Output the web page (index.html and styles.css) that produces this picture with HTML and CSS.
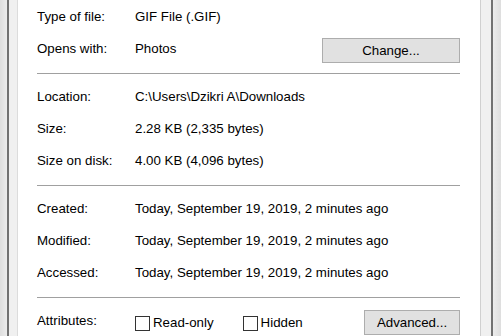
FILE: index.html
```html
<!DOCTYPE html>
<html lang="en">
<head>
    <meta charset="UTF-8">
    <meta name="viewport" content="width=device-width, initial-scale=1.0">
    <title>File Properties</title>
    <link rel="stylesheet" href="styles.css">
</head>
<body>
    <div class="dialog">
        <div class="edge edge-left"></div>
        <div class="gutter gutter-left"></div>

        <div class="page">
            <div class="row">
                <span class="label">Type of file:</span>
                <span class="value">GIF File (.GIF)</span>
            </div>
            <div class="row">
                <span class="label">Opens with:</span>
                <span class="value">Photos</span>
                <button class="btn btn-change">Change...</button>
            </div>

            <hr class="sep">

            <div class="row">
                <span class="label">Location:</span>
                <span class="value">C:\Users\Dzikri A\Downloads</span>
            </div>
            <div class="row">
                <span class="label">Size:</span>
                <span class="value">2.28 KB (2,335 bytes)</span>
            </div>
            <div class="row">
                <span class="label">Size on disk:</span>
                <span class="value">4.00 KB (4,096 bytes)</span>
            </div>

            <hr class="sep">

            <div class="row">
                <span class="label">Created:</span>
                <span class="value">Today, September 19, 2019, 2 minutes ago</span>
            </div>
            <div class="row">
                <span class="label">Modified:</span>
                <span class="value">Today, September 19, 2019, 2 minutes ago</span>
            </div>
            <div class="row">
                <span class="label">Accessed:</span>
                <span class="value">Today, September 19, 2019, 2 minutes ago</span>
            </div>

            <hr class="sep">

            <div class="row">
                <span class="label">Attributes:</span>
                <div class="attrs">
                    <label class="check"><input type="checkbox"> Read-only</label>
                    <label class="check"><input type="checkbox"> Hidden</label>
                </div>
                <button class="btn btn-advanced">Advanced...</button>
            </div>
        </div>

        <div class="gutter gutter-right"></div>
        <div class="edge edge-right"></div>
    </div>
</body>
</html>
```

FILE: styles.css
```css
* {
    margin: 0;
    padding: 0;
    box-sizing: border-box;
    font-family: 'Liberation Sans', Arial, sans-serif;
}

body {
    background: #f0f0f0;
    color: #000;
    font-size: 13.3px;
    overflow: hidden;
}

/* window frame */
.dialog {
    display: flex;
    height: 336px;
}

.edge {
    width: 9px;
}

.edge-left {
    background: linear-gradient(to right, #dedede, #ececec);
    border-right: 2px solid #727272;
}

.edge-right {
    width: 10px;
    background: linear-gradient(to right, #ececec, #dedede);
    border-left: 2px solid #727272;
}

.gutter {
    background: #f0f0f0;
}

.gutter-left {
    width: 8px;
}

.gutter-right {
    width: 10px;
}

/* tab page */
.page {
    flex: 1;
    background: #fff;
    border-left: 1px solid #dcdcdc;
    border-right: 1px solid #d0d0d0;
    padding: 1px 20px 0 19px;
}

.row {
    display: flex;
    height: 32px;
    line-height: 32px;
    align-items: center;
}

.label {
    width: 98px;
    flex-shrink: 0;
}

.value {
    white-space: nowrap;
}

.sep {
    border: none;
    border-top: 1px solid #a0a0a0;
    margin: 8px 0 7px;
}

.btn {
    margin-left: auto;
    align-self: flex-end;
    margin-bottom: 2px;
    height: 25px;
    background: #e1e1e1;
    border: 1px solid #adadad;
    font-size: 13.3px;
    color: #000;
    line-height: 23px;
}

.btn-change {
    width: 138px;
}

.btn-advanced {
    width: 96px;
}

/* attribute checkboxes */
.attrs {
    display: flex;
    gap: 29px;
    margin-top: 4px;
}

.check {
    display: flex;
    align-items: center;
    gap: 3px;
    white-space: nowrap;
}

.check input {
    appearance: none;
    width: 15px;
    height: 15px;
    border: 1px solid #333;
    background: #fff;
    margin: 0;
}
```
